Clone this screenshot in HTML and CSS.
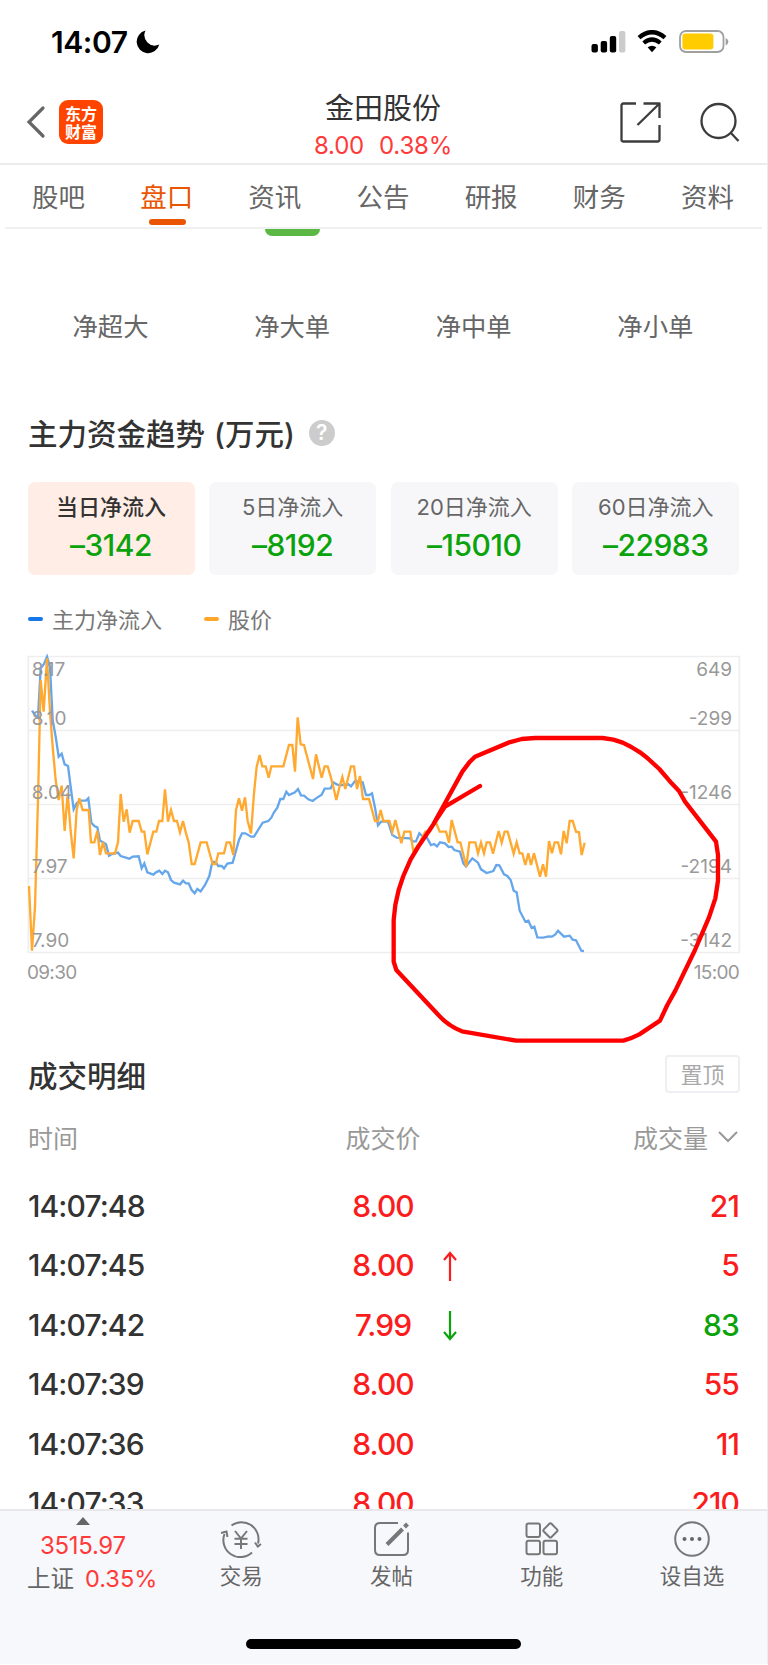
FILE: index.html
```
<!DOCTYPE html>
<html lang="zh-CN">
<head>
  <meta charset="UTF-8">
  <title>金田股份</title>
  <link rel="stylesheet" href="styles.css">
</head>
<body>
<div class="phone">

  <div class="status">
    <span class="clock">14:07</span>
    <svg class="moon" width="24" height="24" viewBox="0 0 24 24"><path d="M9.5 0.5A11.5 11.5 0 1 0 23.3 14.6A10.5 10.5 0 0 1 9.5 0.5z"/></svg>
    <svg class="signal" width="36" height="24" viewBox="0 0 36 24">
      <rect x="0.5" y="14" width="6.4" height="8.5" rx="2"/>
      <rect x="9.7" y="11" width="6.4" height="11.5" rx="2"/>
      <rect x="18.8" y="6" width="6.4" height="16.5" rx="2"/>
      <rect x="28" y="1" width="6.4" height="21.5" rx="2" fill="#ccc"/>
    </svg>
    <svg class="wifi" width="30" height="24" viewBox="0 0 30 24">
      <path d="M2 7.6Q15 -3.2 28 7.6" fill="none" stroke="#000" stroke-width="4.4"/>
      <path d="M6.7 13Q15 6 23.3 13" fill="none" stroke="#000" stroke-width="4.2"/>
      <path d="M10.6 17.3Q15 14 19.4 17.3L15 22.3z"/>
    </svg>
    <svg class="battery" width="50" height="24" viewBox="0 0 50 24">
      <rect x="1" y="1" width="43.5" height="21" rx="6" fill="none" stroke="#a0a0a0" stroke-width="1.8"/>
      <rect x="3.4" y="3.6" width="31" height="15.8" rx="3" fill="#fc0"/>
      <path d="M46.6 8Q49.4 9 49.4 11.6T46.6 15.4z" fill="#a0a0a0"/>
    </svg>
  </div>

  <div class="header">
    <svg class="back" width="20" height="34" viewBox="0 0 20 34"><path d="M17 3L3 17L17 31" fill="none" stroke="#666" stroke-width="3.2" stroke-linecap="round"/></svg>
    <div class="logo">东方<br>财富</div>
    <div class="stock">
      <div class="stock-name">金田股份</div>
      <div class="stock-price"><span>8.00</span><span>0.38%</span></div>
    </div>
    <svg class="share" width="42" height="42" viewBox="0 0 42 42" fill="none" stroke="#3c3c3c" stroke-width="2.3" stroke-linejoin="round">
      <path d="M17 2.5H4.5Q2.5 2.5 2.5 4.5V38.5Q2.5 40.5 4.5 40.5H38.5Q40.5 40.5 40.5 38.5V24"/>
      <path d="M24.5 2.5H40.5V17M40 3L18.5 24"/>
    </svg>
    <svg class="search" width="40" height="42" viewBox="0 0 40 42" fill="none" stroke="#3c3c3c" stroke-width="2.3">
      <circle cx="18.5" cy="20" r="17"/>
      <path d="M30.5 31.5L38.5 40"/>
    </svg>
  </div>

  <div class="tabs">
    <span class="tab">股吧</span>
    <span class="tab active">盘口</span>
    <span class="tab">资讯</span>
    <span class="tab">公告</span>
    <span class="tab">研报</span>
    <span class="tab">财务</span>
    <span class="tab">资料</span>
  </div>
  <div class="green-bar"></div>

  <div class="orders">
    <span>净超大</span>
    <span>净大单</span>
    <span>净中单</span>
    <span>净小单</span>
  </div>

  <div class="title">主力资金趋势<span class="unit">(万元)</span><span class="help">?</span></div>

  <div class="cards">
    <div class="card on"><div class="card-name">当日净流入</div><div class="card-value">–3142</div></div>
    <div class="card"><div class="card-name">5日净流入</div><div class="card-value">–8192</div></div>
    <div class="card"><div class="card-name">20日净流入</div><div class="card-value">–15010</div></div>
    <div class="card"><div class="card-name">60日净流入</div><div class="card-value">–22983</div></div>
  </div>

  <div class="legend">
    <i class="dash blue"></i><span>主力净流入</span>
    <i class="dash orange"></i><span>股价</span>
  </div>

  <!-- 3 units = 1px -->
  <svg class="chart" width="713" height="297" viewBox="84 48 2139 891">
    <g class="grid">
      <path d="M85 49.500H2218V937.500H85z"/>
      <path d="M85 271.500H2218M85 493.500H2218M85 715.500H2218"/>
    </g>
    <polyline class="line flow" points="96,212 105,225 114,233 122,85 132,72 141,50 150,80 158,240 167,290 176,350 185,341 194,373 204,378 212,440 221,508 230,490 240,482 258,482 265,475 274,548 283,558 292,562 300,602 309,607 318,613 327,647 336,642 354,638 362,648 388,656 398,650 416,649 425,685 433,670 442,697 460,704 468,697 478,692 487,702 495,692 504,697 513,720 522,728 540,733 549,722 558,730 566,730 575,750 584,760 592,747 602,754 615,735 628,708 637,665 647,667 655,678 665,678 672,685 682,671 698,668 717,600 726,580 736,580 753,590 762,590 788,548 805,543 814,533 822,517 832,503 841,477 850,477 859,455 867,465 885,457 894,447 903,466 912,467 925,478 938,483 948,475 965,464 974,446 992,445 1000,427 1010,433 1020,436 1045,433 1053,439 1065,423 1088,427 1098,465 1108,465 1116,460 1125,503 1134,556 1143,545 1164,545 1177,585 1190,593 1230,595 1238,604 1248,604 1258,580 1267,588 1280,592 1293,615 1302,612 1311,619 1320,607 1335,610 1346,621 1355,620 1363,630 1380,635 1390,670 1398,679 1417,655 1434,668 1443,688 1460,699 1480,693 1489,675 1498,676 1512,703 1522,708 1532,720 1541,752 1550,757 1559,812 1576,845 1585,842 1595,864 1603,860 1612,892 1630,893 1646,889 1656,890 1666,883 1674,872 1692,890 1709,887 1718,899 1728,901 1744,932 1752,933"/>
    <polyline class="line price" points="87,738 96,932 105,800 114,480 122,120 131,215 141,55 150,215 158,320 167,420 176,480 185,437 194,573 203,460 212,573 221,655 230,510 238,475 248,510 266,510 273,607 283,607 292,573 300,645 309,607 318,640 345,640 354,607 362,462 371,545 380,508 389,578 398,543 416,543 425,575 433,575 442,643 460,575 469,575 477,543 487,543 495,448 504,545 513,510 522,543 531,543 540,577 549,543 558,580 566,607 575,672 584,672 602,607 620,607 638,672 647,672 655,640 672,640 680,607 690,607 700,645 708,510 717,475 726,512 735,472 743,543 753,580 762,460 770,380 779,345 787,379 797,379 806,413 814,379 850,379 867,315 877,315 885,395 893,232 902,313 912,315 939,417 948,343 965,413 974,379 983,379 992,410 1001,445 1009,480 1018,443 1027,411 1036,447 1053,379 1062,379 1071,447 1080,408 1089,477 1107,477 1125,543 1134,543 1142,510 1150,543 1168,543 1177,575 1186,540 1195,575 1204,610 1213,575 1231,575 1240,635 1259,607 1276,575 1290,575 1307,545 1319,575 1338,575 1347,608 1355,540 1373,607 1381,607 1399,680 1408,607 1426,607 1434,640 1443,608 1452,640 1460,607 1470,607 1479,641 1496,573 1505,608 1514,575 1523,575 1541,641 1550,607 1559,640 1567,640 1576,675 1585,640 1593,675 1602,640 1620,710 1629,673 1638,710 1647,603 1656,640 1664,607 1674,607 1683,643 1691,573 1700,610 1709,543 1718,543 1728,575 1737,577 1745,645 1754,608"/>
    <g class="axis">
      <text x="95" y="109">8.17</text>
      <text x="95" y="254">8.10</text>
      <text x="95" y="477">8.04</text>
      <text x="95" y="699">7.97</text>
      <text x="95" y="921">7.90</text>
    </g>
    <g class="axis right">
      <text x="2196" y="109">649</text>
      <text x="2196" y="254">-299</text>
      <text x="2196" y="477">-1246</text>
      <text x="2196" y="699">-2194</text>
      <text x="2196" y="921">-3142</text>
    </g>
    <!-- red marker -->
    <path class="marker" d="M1440 438L1335 500L1305 545M1425 350L1408 367L1387 395L1332 495L1300 553L1255 620L1232 658L1210 708L1196 750L1186 795L1181 840V965L1189 990L1316 1126Q1345 1158 1386 1174L1549 1202H1870Q1895 1195 1918 1183L1980 1142L2002 1095L2026 1052L2085 930L2110 872L2127 832L2146 775L2154 722V645L2148 605L2055 485L2037 453L2015 430L1978 387L1942 354L1920 337L1894 321L1868 308L1840 299L1808 294H1605L1565 297L1528 307z"/>
  </svg>
  <div class="times"><span>09:30</span><span>15:00</span></div>

  <div class="deals-head">
    <span class="deals-title">成交明细</span>
    <span class="pin">置顶</span>
  </div>

  <div class="deals">
    <div class="row head">
      <span>时间</span>
      <span class="col-price">成交价</span>
      <span class="col-vol">成交量<svg width="22" height="14" viewBox="0 0 22 14"><path d="M2 2L11 11L20 2" fill="none" stroke="#999" stroke-width="2"/></svg></span>
    </div>
    <div class="row"><span>14:07:48</span><span class="col-price red">8.00</span><span class="col-vol red">21</span></div>
    <div class="row">
      <span>14:07:45</span>
      <span class="col-price red">8.00<svg width="14" height="30" viewBox="0 0 14 30"><path d="M7 30V2M1 9L7 2L13 9"/></svg></span>
      <span class="col-vol red">5</span>
    </div>
    <div class="row">
      <span>14:07:42</span>
      <span class="col-price red">7.99<svg class="down" width="14" height="30" viewBox="0 0 14 30"><path d="M7 0V28M1 21L7 28L13 21"/></svg></span>
      <span class="col-vol green">83</span>
    </div>
    <div class="row"><span>14:07:39</span><span class="col-price red">8.00</span><span class="col-vol red">55</span></div>
    <div class="row"><span>14:07:36</span><span class="col-price red">8.00</span><span class="col-vol red">11</span></div>
    <div class="row"><span>14:07:33</span><span class="col-price red">8.00</span><span class="col-vol red">210</span></div>
  </div>

  <div class="bottom">
    <div class="index">
      <svg width="14" height="8" viewBox="0 0 14 8"><path d="M7 0L14 8H0z" fill="#666"/></svg>
      <div class="index-value">3515.97</div>
      <div class="index-rate">上证<span>0.35%</span></div>
    </div>
    <div class="nav">
      <div class="nav-item">
        <svg width="42" height="38" viewBox="0 0 42 38">
          <path d="M11.5 5.5A17 17 0 0 1 38 23.5M32 32.5A17 17 0 0 1 4.5 14"/>
          <path d="M1 13L6.5 11.5L7.5 17M41 24L37.8 26.5L35 22.5"/>
          <path d="M15 11L21 18.5L27 11M14.5 18.7H27.5M14.5 24H27.5M21 18.5V29"/>
        </svg>
        <span>交易</span>
      </div>
      <div class="nav-item">
        <svg width="42" height="38" viewBox="0 0 42 38">
          <path d="M28 3H10Q5 3 5 8V30Q5 35 10 35H33Q38 35 38 30V12.5"/>
          <path d="M17 24.5L32.5 9" stroke-width="4"/>
          <path d="M34.5 7L37.5 4" stroke-width="4"/>
        </svg>
        <span>发帖</span>
      </div>
      <div class="nav-item">
        <svg width="42" height="38" viewBox="0 0 42 38">
          <rect x="5.5" y="3.5" width="13.5" height="13.5" rx="2"/>
          <rect x="5.5" y="20.8" width="13.5" height="13.5" rx="2"/>
          <rect x="22.5" y="20.8" width="13.5" height="13.5" rx="2"/>
          <rect x="24" y="5" width="10.8" height="10.8" rx="1.5" transform="rotate(45 29.4 10.4)"/>
        </svg>
        <span>功能</span>
      </div>
      <div class="nav-item">
        <svg width="42" height="38" viewBox="0 0 42 38">
          <circle cx="21" cy="19" r="16.8"/>
          <g fill="#666" stroke="none"><circle cx="13.5" cy="19" r="2"/><circle cx="21" cy="19" r="2"/><circle cx="28.5" cy="19" r="2"/></g>
        </svg>
        <span>设自选</span>
      </div>
    </div>
    <div class="home"></div>
  </div>
</div>
</body>
</html>
```
FILE: styles.css
```
* {
  box-sizing: border-box;
}
body {
  margin: 0;
  background: #fff;
  font-family: Inter, "Noto Sans CJK SC", sans-serif;
  color: #333;
}
svg {
  display: block;
  flex: none;
}
.phone {
  width: 768px;
  height: 1664px;
  border-right: 1px solid #ececee;
  overflow: hidden;
  display: flex;
  flex-direction: column;
}
.red {
  color: #fb1d1d;
}
.green {
  color: #0ba30b;
}

/* status bar */
.status {
  height: 80px;
  padding: 30px 38px 0 51px;
  display: flex;
}
.clock {
  font-size: 30px;
  line-height: 24px;
  font-weight: 600;
  letter-spacing: -0.4px;
  color: #000;
  width: 85px;
}
.signal {
  margin-left: auto;
}
.wifi {
  margin-left: 10px;
}
.battery {
  margin-left: 12px;
}

/* header */
.header {
  height: 85px;
  flex: none;
  border-bottom: 2px solid #ececec;
  padding: 0 24px 0 26px;
  display: flex;
  align-items: flex-start;
}
.back {
  margin-top: 25px;
}
.logo {
  width: 44px;
  height: 44px;
  margin: 20px 0 0 13px;
  padding-top: 4px;
  border-radius: 9px;
  background: #ff4400;
  color: #fff;
  font-family: "Noto Sans CJK SC", sans-serif;
  font-size: 16px;
  line-height: 18px;
  font-weight: 700;
  text-align: center;
}
.stock {
  width: 400px;
  margin-left: 80px;
  padding-top: 12px;
  text-align: center;
}
.stock-name {
  font-size: 29px;
  line-height: 34px;
}
.stock-price {
  display: flex;
  justify-content: center;
  gap: 15px;
  margin-top: 7px;
  font-size: 24px;
  line-height: 26px;
  letter-spacing: -0.2px;
  color: #ff3a3a;
}
.share {
  margin: 21px 0 0 36px;
}
.search {
  margin: 21px 0 0 39px;
}

/* tabs */
.tabs {
  height: 64px;
  flex: none;
  margin: 0 5px;
  border-bottom: 2px solid #f0f0f0;
  display: flex;
  justify-content: space-between;
  padding: 0 28px 0 27px;
}
.tab {
  width: 53px;
  font-size: 26.5px;
  line-height: 64px;
  color: #666;
  white-space: nowrap;
}
.tab.active {
  color: #ea5504;
}
.tab.active::after {
  content: "";
  display: block;
  width: 37px;
  height: 6px;
  margin: -10px auto 0 9px;
  border-radius: 3px;
  background: #ea5504;
}
.green-bar {
  width: 55px;
  height: 7px;
  flex: none;
  margin: 0 0 0 265px;
  border-radius: 0 0 8px 8px;
  background: #5bb845;
}

.orders {
  display: grid;
  grid-template-columns: repeat(4, 167px);
  gap: 14.6px;
  margin: 72px 0 0 27px;
  text-align: center;
  font-size: 25.3px;
  line-height: 38px;
  color: #666;
}

.title {
  display: flex;
  align-items: center;
  height: 40px;
  margin: 66px 0 0 28px;
  font-size: 29.5px;
  font-weight: 500;
}
.unit {
  margin-left: 9px;
}
.help {
  width: 26px;
  height: 26px;
  margin: 2px 0 0 14px;
  border-radius: 50%;
  background: #ccc;
  color: #fff;
  font-size: 21px;
  line-height: 26px;
  font-weight: 600;
  text-align: center;
}

/* inflow cards */
.cards {
  display: grid;
  grid-template-columns: repeat(4, 167px);
  gap: 14.6px;
  margin: 30px 0 0 27.5px;
}
.card {
  height: 93px;
  padding-top: 10px;
  border-radius: 7px;
  background: #f7f7fa;
  text-align: center;
}
.card.on {
  background: #ffede6;
}
.card-name {
  font-size: 22px;
  line-height: 31px;
  color: #666;
}
.card.on .card-name {
  color: #333;
  font-weight: 500;
}
.card-value {
  font-size: 30px;
  line-height: 44px;
  font-weight: 500;
  letter-spacing: -0.5px;
  color: #0ba30b;
}

/* chart */
.legend {
  display: flex;
  align-items: center;
  height: 32px;
  margin: 27px 0 0 28px;
  font-size: 22px;
  color: #777;
}
.dash {
  width: 15px;
  height: 4px;
  margin: 2px 9px 0 0;
  border-radius: 2px;
}
.blue {
  background: #1677e6;
}
.orange {
  margin-left: 42px;
  background: #ffa62b;
}
.chart {
  margin: 22px 0 0 28px;
  overflow: visible;
  position: relative;
}
.grid {
  fill: none;
  stroke: #eeeeee;
  stroke-width: 5;
}
.line {
  fill: none;
  stroke-width: 7;
  stroke-linejoin: miter;
}
.flow {
  stroke: #66a7ec;
}
.price {
  stroke: #ffa930;
}
.axis {
  font-size: 57px;
  fill: #999;
}
.right {
  text-anchor: end;
}
.marker {
  fill: none;
  stroke: #f00;
  stroke-width: 13;
  stroke-linecap: round;
  stroke-linejoin: round;
}
.times {
  display: flex;
  justify-content: space-between;
  width: 712px;
  margin: 7px 0 0 27px;
  font-size: 19px;
  line-height: 26px;
  letter-spacing: -0.7px;
  color: #999;
}

/* deals */
.deals-head {
  display: flex;
  justify-content: space-between;
  align-items: center;
  height: 38px;
  margin: 69px 27px 0 28px;
}
.deals-title {
  font-size: 29.5px;
  font-weight: 500;
}
.pin {
  width: 75px;
  height: 38px;
  border: 2px solid #efeff3;
  border-radius: 4px;
  font-size: 22px;
  line-height: 36px;
  text-align: center;
  color: #aaa;
}
.deals {
  height: 416px;
  overflow: hidden;
  padding: 12px 28px 0;
}
.row {
  display: grid;
  grid-template-columns: 237px 236px 238px;
  align-items: center;
  height: 59.5px;
  font-size: 30px;
  font-weight: 500;
  letter-spacing: -0.9px;
}
.row.head {
  height: 64px;
  margin-bottom: 7px;
  font-size: 25px;
  font-weight: 400;
  letter-spacing: 0;
  color: #999;
}
.col-price {
  display: flex;
  justify-content: center;
  position: relative;
}
.col-price svg {
  position: absolute;
  left: 178px;
  top: 4px;
  fill: none;
  stroke: #fb1d1d;
  stroke-width: 2.2;
}
.col-price svg.down {
  stroke: #0ba30b;
}
.col-vol {
  display: flex;
  justify-content: flex-end;
  align-items: center;
}
.col-vol svg {
  margin-left: 9px;
}

/* bottom bar */
.bottom {
  flex: none;
  height: 155px;
  margin-top: auto;
  border-top: 2px solid #e8e8ea;
  background: #f7f8fb;
  display: grid;
  grid-template-columns: 166px 1fr;
  grid-template-rows: 128px 10px;
}
.index {
  padding: 6px 0 0 27px;
  font-size: 24px;
  white-space: nowrap;
}
.index svg {
  margin-left: 49px;
}
.index-value {
  margin: 7px 0 0 13px;
  line-height: 28px;
  letter-spacing: -0.3px;
  color: #ff3a3a;
}
.index-rate {
  display: flex;
  gap: 11px;
  line-height: 37px;
  font-size: 23.5px;
  color: #666;
}
.index-rate span {
  color: #ff3a3a;
}
.nav {
  display: grid;
  grid-template-columns: repeat(4, 150.3px);
  padding-top: 9px;
}
.nav-item {
  display: flex;
  flex-direction: column;
  align-items: center;
  font-size: 21.5px;
  line-height: 32px;
  color: #666;
}
.nav-item svg {
  fill: none;
  stroke: #777;
  stroke-width: 2;
  margin-bottom: 2px;
}
.home {
  grid-column: 1 / 3;
  width: 275px;
  height: 10px;
  margin-left: 246px;
  border-radius: 5px;
  background: #000;
}
```
